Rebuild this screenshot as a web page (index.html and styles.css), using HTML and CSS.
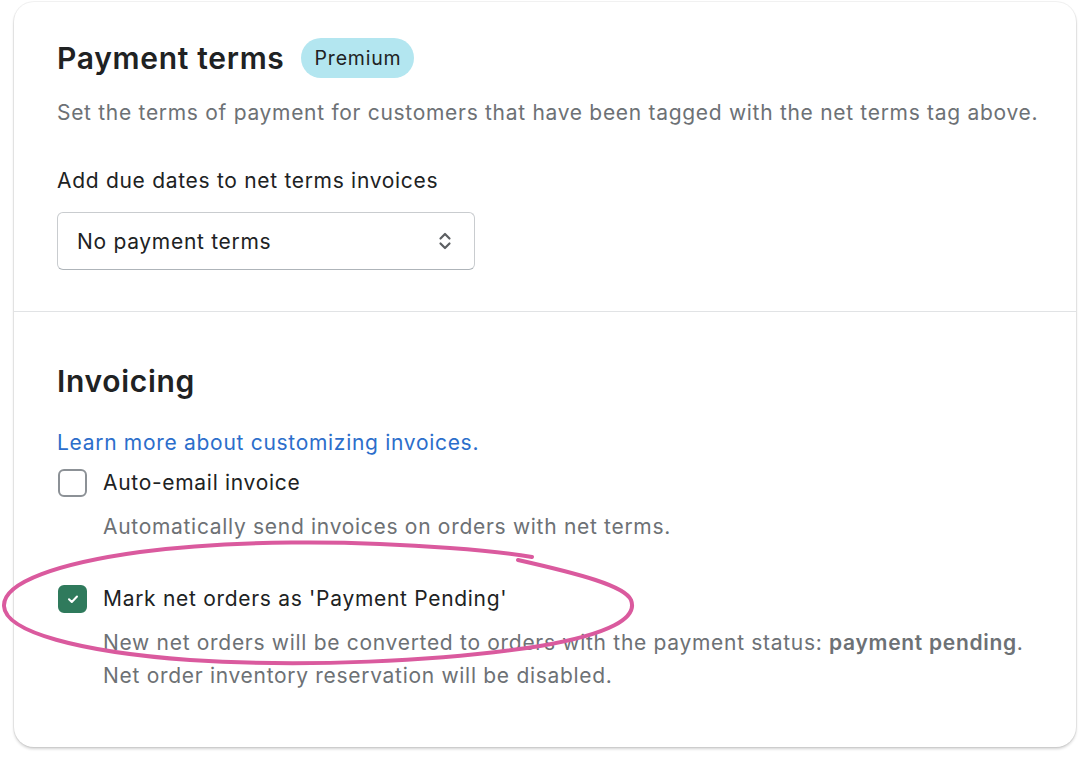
FILE: index.html
```html
<!DOCTYPE html>
<html>
<head>
<meta charset="utf-8">
<link rel="stylesheet" href="styles.css">
</head>
<body>
<div class="card">
  <section class="section first">
    <div class="title-row">
      <h2 class="title">Payment terms</h2>
      <span class="badge">Premium</span>
    </div>
    <p class="subdued desc">Set the terms of payment for customers that have been tagged with the net terms tag above.</p>
    <label class="label">Add due dates to net terms invoices</label>
    <div class="select">
      <span class="select-text">No payment terms</span>
      <svg class="chev" width="14" height="20" viewBox="0 0 14 20"><path d="M2.5 7.5 L7 3 L11.5 7.5 M2.5 12.5 L7 17 L11.5 12.5" fill="none" stroke="#5c5f62" stroke-width="2.2" stroke-linecap="round" stroke-linejoin="round"/></svg>
    </div>
  </section>
  <section class="section second">
    <h2 class="title">Invoicing</h2>
    <a class="link" href="#">Learn more about customizing invoices.</a>
    <div class="check-row">
      <span class="box"></span>
      <span class="check-label">Auto-email invoice</span>
    </div>
    <p class="subdued help">Automatically send invoices on orders with net terms.</p>
    <div class="check-row row2">
      <span class="box checked"><svg width="16" height="16" viewBox="0 0 16 16"><path d="M4 8.3 L6.8 11 L12 5.5" fill="none" stroke="#fff" stroke-width="2" stroke-linecap="round" stroke-linejoin="round"/></svg></span>
      <span class="check-label">Mark net orders as 'Payment Pending'</span>
    </div>
    <p class="subdued help help2">New net orders will be converted to orders with the payment status: <strong>payment pending</strong>.<br>Net order inventory reservation will be disabled.</p>
  </section>
</div>
<svg class="circle" width="1082" height="758" viewBox="0 0 1082 758">
  <path d="M518 560 C 580 574 625 586 631 600 C 638 618 610 634 540 646 C 440 662 300 667 190 660 C 80 652 5 632 4 606 C 3 582 60 563 140 552 C 230 540 350 540 450 548 C 490 551 515 554 532 557" fill="none" stroke="#da5a9e" stroke-width="4" stroke-linecap="round"/>
</svg>
</body>
</html>
```
FILE: styles.css
```css
html, body {
  margin: 0;
  padding: 0;
  background: #ffffff;
}
body {
  font-family: Inter, "Noto Sans", sans-serif;
  color: #202223;
  position: relative;
  width: 1082px;
  height: 758px;
  overflow: hidden;
}
.card {
  margin: 2px 6px 0 14px;
  width: 1062px;
  height: 745px;
  box-sizing: border-box;
  background: #fff;
  border-radius: 20px;
  box-shadow: 0 2px 3px rgba(0, 0, 0, 0.18), 0 0 0 1px rgba(0, 0, 0, 0.05);
}
.section {
  padding: 36px 20px 0 43px;
}
.section.first {
  padding-bottom: 41px;
  border-bottom: 1px solid #e1e3e5;
}
.section.second {
  padding-top: 49px;
}
.title-row {
  display: flex;
  align-items: center;
  gap: 16px;
}
.title {
  margin: 0;
  font-size: 30px;
  line-height: 40px;
  font-weight: 600;
  letter-spacing: 0.7px;
}
.badge {
  display: inline-flex;
  align-items: center;
  height: 40px;
  padding: 0 13px 0 14px;
  border-radius: 20px;
  background: #b3e6f0;
  font-size: 19.5px;
  letter-spacing: 0.8px;
  color: #202223;
}
.subdued {
  color: #6d7175;
}
p {
  margin: 0;
}
.desc, .label, .select, .link, .check-label, .help {
  font-size: 21px;
  letter-spacing: 0.7px;
  white-space: nowrap;
}
.desc {
  margin-top: 20px;
  line-height: 30px;
}
.label {
  display: block;
  margin-top: 38px;
  line-height: 30px;
}
.select {
  margin-top: 16px;
  width: 418px;
  height: 58px;
  box-sizing: border-box;
  border: 1px solid #c9cccf;
  border-bottom-color: #aeb4b9;
  border-radius: 6px;
  display: flex;
  align-items: center;
  justify-content: space-between;
  padding: 0 22px 0 19px;
}
.link {
  display: block;
  margin-top: 27px;
  line-height: 30px;
  color: #2c6ecb;
  text-decoration: none;
}
.check-row {
  margin-top: 10px;
  display: flex;
  align-items: center;
  gap: 16px;
  height: 30px;
}
.row2 {
  margin-top: 42px;
}
.box {
  width: 29px;
  height: 28px;
  box-sizing: border-box;
  border: 2px solid #8c9196;
  border-radius: 6px;
  margin-left: 1px;
  display: flex;
  align-items: center;
  justify-content: center;
}
.box.checked {
  background: #2f7a5c;
  border-color: #2f7a5c;
}
.check-label {
  line-height: 30px;
}
.help {
  margin-top: 14px;
  margin-left: 46px;
  line-height: 30px;
}
.help2 {
  margin-top: 12px;
  line-height: 33px;
}
.help strong {
  font-weight: 600;
  color: #6d7175;
}
.circle {
  position: absolute;
  left: 0;
  top: 0;
  pointer-events: none;
}
```
